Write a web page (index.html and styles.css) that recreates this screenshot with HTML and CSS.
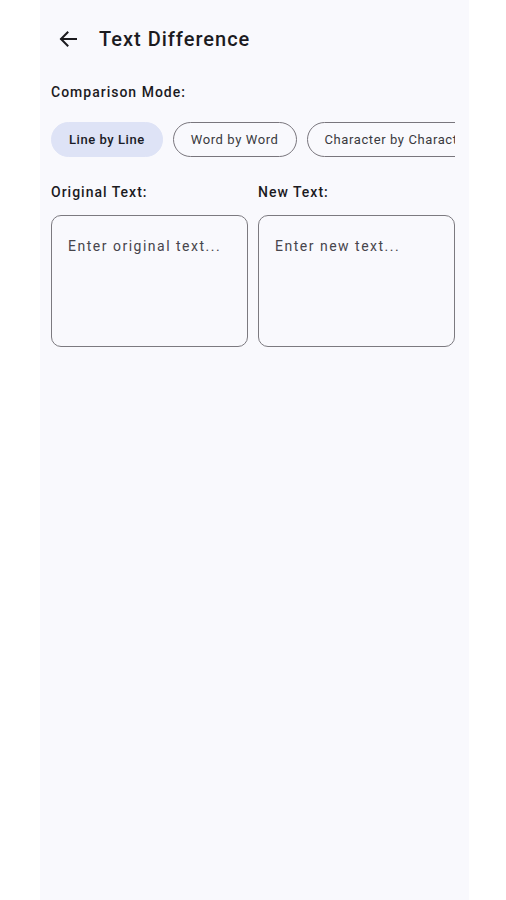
FILE: index.html
```html
<!DOCTYPE html>
<html lang="en">
<head>
<meta charset="utf-8">
<title>Text Difference</title>
<link rel="stylesheet" href="styles.css">
</head>
<body>
<div class="screen">
  <header class="topbar">
    <button class="back" aria-label="Back">
      <svg width="24" height="24" viewBox="0 0 24 24" fill="none" stroke="#1c1b1f" stroke-width="2" stroke-linecap="square">
        <path d="M20 12H5.5"/>
        <path d="M11.5 5.5L5 12l6.5 6.5"/>
      </svg>
    </button>
    <h1 class="title">Text Difference</h1>
  </header>
  <main class="content">
    <div class="section-label">Comparison Mode:</div>
    <div class="chips">
      <span class="chip selected">Line by Line</span>
      <span class="chip">Word by Word</span>
      <span class="chip">Character by Character</span>
    </div>
    <div class="inputs">
      <div class="field">
        <div class="field-label">Original Text:</div>
        <textarea class="box" placeholder="Enter original text..."></textarea>
      </div>
      <div class="field">
        <div class="field-label">New Text:</div>
        <textarea class="box" placeholder="Enter new text..."></textarea>
      </div>
    </div>
  </main>
</div>
</body>
</html>
```
FILE: styles.css
```css
* { box-sizing: border-box; }
html, body { margin: 0; padding: 0; background: #ffffff; }
body { font-family: Roboto, "Noto Sans", sans-serif; color: #1c1b1f; }

.screen {
  margin-left: 40px;
  width: 429px;
  min-height: 900px;
  background: #f9f9fd;
}

.topbar {
  display: flex;
  align-items: center;
  height: 78px;
  padding-left: 16px;
  gap: 19px;
}
.back {
  border: 0;
  background: none;
  padding: 0;
  width: 24px;
  height: 24px;
  display: flex;
}
.title {
  margin: 0;
  font-size: 20px;
  font-weight: 500;
  letter-spacing: 1px;
  color: #1c1b1f;
}

.content {
  padding: 0 14px 0 11px;
}

.section-label {
  font-size: 14px;
  font-weight: 500;
  letter-spacing: 1px;
  line-height: 28px;
}

.chips {
  display: flex;
  gap: 10px;
  margin-top: 16px;
  overflow: hidden;
  white-space: nowrap;
}
.chip {
  flex: none;
  height: 35px;
  border-radius: 18px;
  border: 1px solid #79767d;
  padding: 0 17px;
  display: flex;
  align-items: center;
  font-size: 13px;
  font-weight: 400;
  letter-spacing: 0.6px;
  color: #3a3a40;
}
.chip.selected {
  background: #dee3f6;
  border-color: #dee3f6;
  color: #1a1b26;
  font-weight: 500;
  letter-spacing: 0.55px;
}

.inputs {
  display: flex;
  gap: 10px;
  margin-top: 27px;
}
.field { flex: 1; display: flex; flex-direction: column; }
.field-label {
  font-size: 14px;
  font-weight: 500;
  letter-spacing: 1px;
  line-height: 16px;
  margin-bottom: 15px;
}
.box {
  height: 132px;
  width: 100%;
  border: 1px solid #7c7a80;
  border-radius: 10px;
  background: transparent;
  resize: none;
  padding: 22px 16px;
  font-family: Roboto, "Noto Sans", sans-serif;
  font-size: 14px;
  letter-spacing: 1.5px;
  color: #1c1b1f;
  outline: none;
}
.box::placeholder { color: #47454c; opacity: 1; }
```
